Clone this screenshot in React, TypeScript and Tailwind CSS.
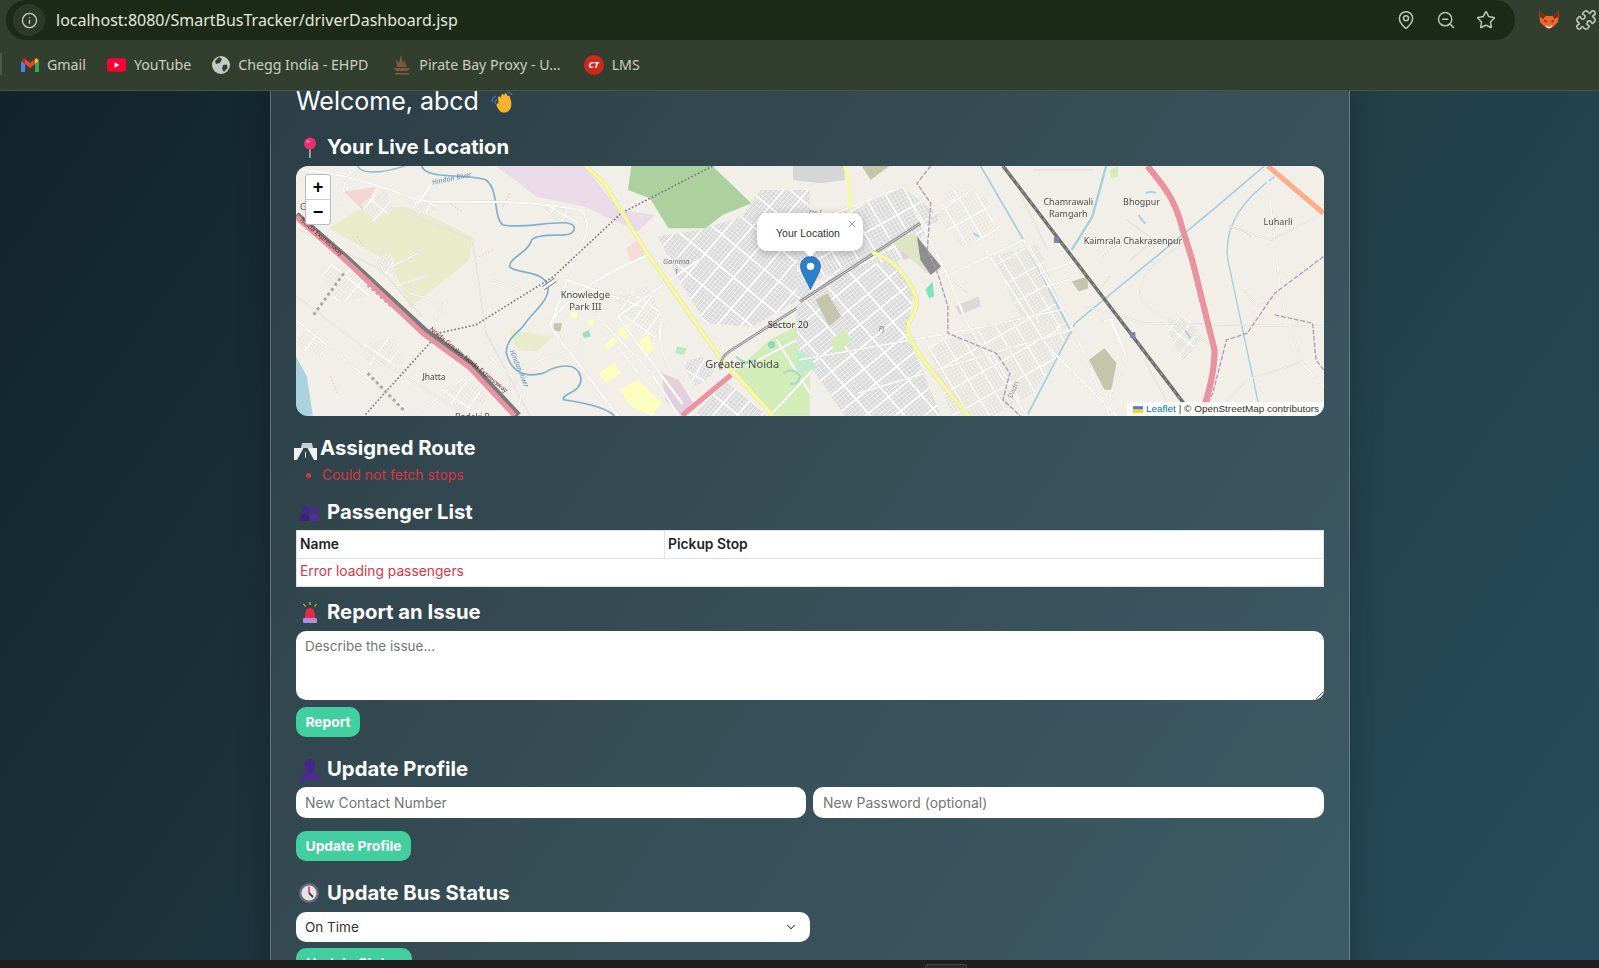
import { Info, ChevronDown, X, ZoomOut, Star, MapPin, Puzzle } from "lucide-react";
import type { ReactNode } from "react";

const L = "#ffffff";

function Urban({ id, points, angle, step = 11, fill = "#dadada", line = 4 }: { id: string; points: string; angle: number; step?: number; fill?: string; line?: number }) {
  const lines = [];
  for (let i = -180; i < 180; i++) lines.push(i);
  return (
    <g>
      <clipPath id={id}>
        <polygon points={points} />
      </clipPath>
      <polygon points={points} fill={fill} />
      <g clipPath={`url(#${id})`}>
        <g transform={`rotate(${angle} 800 400)`}>
          {lines.map((i) => (
            <path key={`a${i}`} d={`M${800 + i * step} -1200V2000`} stroke={L} strokeWidth={i % 5 === 0 ? line * 1.4 : line * 0.4} />
          ))}
          {lines.map((i) => (
            <path key={`b${i}`} d={`M-1200 ${400 + i * step}H2800`} stroke={L} strokeWidth={i % 7 === 0 ? line * 1.4 : line * 0.3} />
          ))}
        </g>
      </g>
    </g>
  );
}

function Road({ d, w = 6, c = L, edge = "#d9d5cc" }: { d: string; w?: number; c?: string; edge?: string }) {
  return (
    <>
      <path d={d} fill="none" stroke={edge} strokeWidth={w + 2} strokeLinecap="round" strokeLinejoin="round" />
      <path d={d} fill="none" stroke={c} strokeWidth={w} strokeLinecap="round" strokeLinejoin="round" />
    </>
  );
}

function MapTiles() {
  const label = { fontFamily: '"Noto Sans", sans-serif', fill: "#4d4d4d" };
  return (
    <svg viewBox="0 0 1028 250" className="block w-[1028px] h-[250px] blur-[0.25px]">
      <rect width="1028" height="250" fill="#f2efe9" />
      {/* left half of the tiles */}
      <g transform="translate(-16.2,-6) scale(0.338,0.333)">
        <polygon points="640,18 900,18 1005,150 1110,165 1060,215 900,140 760,110" fill="#ebdbe8" />
        <polygon points="1040,18 1280,18 1395,130 1310,165 1260,205 1150,205 1095,115 1030,90" fill="#add19e" />
        <polygon points="145,205 230,150 370,140 450,170 570,230 560,300 385,445 330,310" fill="#e9eccb" />
        <polygon points="190,95 285,80 245,150" fill="#f3d6d3" />
        <polygon points="1025,265 1060,240 1080,285 1040,310" fill="#f6dbd6" />
        <polygon points="680,510 810,530 760,575 700,570" fill="#e9eccb" />
        <polygon points="48,590 80,650 98,768 48,768" fill="#aad3df" />
        <Urban id="u1" points="1120,230 1240,210 1370,170 1420,90 1568,90 1568,400 1400,500 1260,490 1170,340" angle={40} />
        <polygon points="1340,640 1450,540 1568,480 1568,768 1470,768" fill="#d3edb8" />
        <polygon points="1130,640 1180,660 1232,745 1190,768 1140,720" fill="#e3cfe0" />
        <Urban id="u2" points="1225,768 1320,665 1440,768" angle={40} />
        <Urban id="u3" points="1190,610 1250,590 1290,640 1230,680" angle={30} step={9} />
        <Urban id="u9" points="240,130 310,90 340,150 275,185" angle={40} step={9} fill="#e8e5dd" line={3} />
        <Urban id="u10" points="370,120 430,100 470,150 410,160" angle={30} step={8} fill="#e8e5dd" line={3} />
        <Urban id="u11" points="285,290 335,280 340,350 295,345" angle={30} step={9} fill="#e8e5dd" line={3} />
        <Urban id="u12" points="120,320 240,300 290,400 170,430" angle={40} step={10} fill="#ebe8e0" line={3} />
        <Urban id="u13" points="235,560 330,530 370,610 270,630" angle={35} step={9} fill="#ebe8e0" line={3} />
        <Urban id="u14" points="48,500 110,520 130,590 60,570" angle={35} step={9} fill="#ebe8e0" line={3} />
        <Urban id="u15" points="990,410 1090,380 1140,500 1100,540 1020,470" angle={35} step={10} fill="#ebe8e0" line={3} />
        <Urban id="u16" points="780,140 860,140 880,190 810,180" angle={30} step={8} fill="#e8e5dd" line={3} />
        <Urban id="u17" points="480,690 560,660 620,720 530,768" angle={35} step={10} fill="#ebe8e0" line={3} />
        <polygon points="1000,510 1040,490 1030,535 1005,530" fill="#fdfdc0" />
        <polygon points="1055,555 1090,520 1105,570 1080,590" fill="#fdfdc0" />
        <polygon points="945,640 990,610 1010,640 965,670" fill="#fdfdc0" />
        <polygon points="1005,690 1060,660 1130,730 1100,768 1040,740" fill="#fdfdc0" />
        <polygon points="960,555 990,530 1000,545 970,570" fill="#fdfdc0" />
        <polygon points="1175,560 1205,565 1195,585 1170,580" fill="#bde8c0" />
        <polygon points="895,520 915,510 920,530 900,535" fill="#9fe0c4" />
        <circle cx="870" cy="465" r="10" fill="#fdfdc0" />
        <circle cx="922" cy="488" r="9" fill="#fdfdc0" />
        <polygon points="810,490 835,490 830,515 812,512" fill="#c5c5ab" />
        <path d="M230,18C240,42 300,42 370,18" fill="none" stroke="#8ab6d0" strokeWidth="4" />
        <path d="M420,18C430,60 560,40 610,60C650,90 630,170 660,195C720,210 860,170 870,200C880,245 780,210 745,240C735,280 680,290 680,320C690,340 770,330 790,370C810,420 740,460 720,500C700,520 670,540 670,580C680,620 710,660 780,640C830,610 880,610 890,650C900,700 830,700 840,720C900,730 960,740 990,768" fill="none" stroke="#7fb0d0" strokeWidth="5" />
        <path d="M230,230l15,30M500,130l40,25M680,100l-20,40M590,290l40,-20M150,650l20,50" fill="none" stroke="#dbb98a" strokeWidth="2" strokeDasharray="5 5" />
        <Road d="M48,30C110,30 230,50 380,110C470,150 620,100 890,150C930,190 900,250 850,340" w={6} />
        <Road d="M170,130C210,50 180,60 220,30" w={5} />
        <Road d="M410,130L450,70" w={8} />
        <Road d="M48,410C220,540 350,650 560,768" w={3} c="#f7f5f1" />
        <Road d="M48,480L240,640L400,768" w={4} />
        <Road d="M330,320L410,280M300,320L330,385L440,345M380,400L490,430L440,515" w={4} />
        <Road d="M60,210L300,330L420,470M350,150L570,240L610,520L740,768" w={2} c="#f7f5f1" />
        <Road d="M800,490C860,400 960,340 1090,285M1070,440L850,360L800,500L1000,768M1240,300L1000,470L1190,730" w={7} />
        <Road d="M940,470L1100,640L1180,768M1130,480C1110,560 1150,620 1160,630M1000,560L1060,640" w={6} />
        <Road d="M560,640L460,720L400,768M620,590L720,680L700,768" w={4} />
        <Road d="M1000,420L1120,385M720,620L880,560M630,360L710,390" w={3} />
        <Road d="M1380,620L1568,520M1450,768L1568,640M1470,540L1568,700" w={6} />
        <path d="M1490,640q30,-20 50,10q-10,30 -30,20M1350,590q30,30 60,10" fill="none" stroke="#a6dcc0" strokeWidth="7" />
        <circle cx="1455" cy="555" r="11" fill="#8fd8b4" />
        <path d="M1280,18L1010,160L810,350L580,495L470,520L250,768" fill="none" stroke="#7d7d7d" strokeWidth="5" strokeDasharray="5 6" />
        <path d="M100,465L190,340" fill="none" stroke="#aaa" strokeWidth="9" strokeDasharray="9 9" />
        <path d="M260,640L370,755" fill="none" stroke="#aaa" strokeWidth="9" strokeDasharray="9 9" />
        <path d="M260,375L330,440" fill="none" stroke="#aaa" strokeWidth="8" strokeDasharray="8 9" />
        <path d="M780,385L815,360" stroke="#7d7d7d" strokeWidth="14" />
        <path d="M780,385L815,360" stroke="#fff" strokeWidth="8" />
        <path d="M48,165L190,290L430,515L565,615L705,768" fill="none" stroke="#7a7a7a" strokeWidth="22" />
        <path d="M48,170L190,297L425,522L560,622L695,768" fill="none" stroke="#e892a2" strokeWidth="15" />
        <Road d="M905,18L960,70L1080,270L1300,590L1460,768" w={11} c="#f7f7a8" edge="#dcdc90" />
        <path d="M1568,420L1330,575Q1300,595 1305,630" fill="none" stroke="#8c8c8c" strokeWidth="8" />
        <path d="M1568,420L1330,575Q1300,595 1305,630" fill="none" stroke="#fff" strokeWidth="2" />
        <path d="M1335,645L1190,768" fill="none" stroke="#e892a2" strokeWidth="15" />
        <text x="60" y="150" fontSize="26" {...label}>Ga</text>
        <text x="510" y="62" fontSize="21" transform="rotate(-12 510 62)" {...label} fill="#5d8fc0" fontStyle="italic" textAnchor="middle">Hindon River</text>
        <text x="718" y="615" fontSize="21" transform="rotate(68 700 610)" {...label} fill="#5d8fc0" fontStyle="italic" textAnchor="middle">Hindon River</text>
        <text x="120" y="235" fontSize="19" transform="rotate(41 120 235)" {...label} fill="#5a2030" textAnchor="middle">Noida Expressway</text>
        <text x="555" y="605" fontSize="19" transform="rotate(40 555 605)" {...label} fill="#5a2030" textAnchor="middle">Noida-Greater Noida Expressway</text>
        <text x="904" y="413" fontSize="28" textAnchor="middle" {...label}>Knowledge</text>
        <text x="904" y="451" fontSize="28" textAnchor="middle" {...label}>Park III</text>
        <text x="1173" y="312" fontSize="22" textAnchor="middle" fontStyle="italic" {...label} fill="#777">Gamma</text>
        <text x="1173" y="342" fontSize="22" textAnchor="middle" fontStyle="italic" {...label} fill="#777">1</text>
        <text x="456" y="662" fontSize="25" textAnchor="middle" {...label}>Jhatta</text>
        <text x="570" y="782" fontSize="25" textAnchor="middle" {...label}>Bodaki B</text>
        <text x="1368" y="624" fontSize="33" textAnchor="middle" {...label}>Greater Noida</text>
      </g>
      {/* right half of the tiles */}
      <g transform="translate(504,-6) scale(0.344,0.333)">
        <polygon points="-20,18 130,18 130,60 60,70 -20,60" fill="#d6d6d6" />
        <polygon points="180,18 260,18 205,60" fill="#c5c5ab" />
        <Urban id="u4" points="-10,205 100,170 300,85 410,170 290,300 100,330 -10,400" angle={-30} />
        <Urban id="u5" points="100,330 280,300 330,400 310,520 410,768 130,768 -10,560 -10,440" angle={50} />
        <polygon points="45,420 80,400 120,470 85,500" fill="#c5c5ab" />
        <polygon points="90,540 130,510 150,540 100,590" fill="#d3edb8" />
        <polygon points="-10,570 30,590 50,625 10,640 -10,635" fill="#bfeccf" />
        <polygon points="290,260 335,250 340,290 300,300" fill="#e3cfe0" />
        <polygon points="260,240 335,220 410,330 370,340" fill="#dde5c5" />
        <polygon points="340,230 410,320 380,345 350,300" fill="#8e8e8e" />
        <polygon points="365,390 385,365 390,410 375,415" fill="#7fe3bd" />
        <Urban id="u6" points="560,290 690,250 780,500 680,560" angle={-30} step={9} fill="#e4e1da" line={3} />
        <Urban id="u7" points="370,560 640,470 790,520 680,700 560,768 440,768" angle={-30} step={10} fill="#e7e4dc" line={3} />
        <Urban id="u8" points="1060,490 1120,470 1170,530 1110,600" angle={40} step={7} fill="#e4e1da" line={3} />
        <Urban id="u18" points="430,90 540,100 570,220 470,260 400,170" angle={-30} step={10} fill="#ebe8e0" line={3} />
        <polygon points="450,440 520,410 525,440 465,465" fill="#d9d9d9" />
        <polygon points="790,365 835,350 838,385 810,395" fill="#c5c5ab" />
        <polygon points="840,600 885,565 920,610 905,690 885,690" fill="#c5c5ab" />
        <polygon points="900,30 925,18 925,50 905,55" fill="#d3edb8" />
        <path d="M1005,100q20,-8 30,0M985,165q10,20 20,25M1120,510l15,25M505,220l15,10" fill="none" stroke="#aad3df" strokeWidth="6" />
        <path d="M880,290l30,-30M900,350l-30,40M1260,190l50,40M1110,600l30,-30M450,370l40,30" fill="none" stroke="#dbb98a" strokeWidth="2" strokeDasharray="5 5" />
        <path d="M890,18L850,170L790,270" fill="none" stroke="#a6cfdf" strokeWidth="7" />
        <path d="M1350,18L1200,150L800,490L660,768" fill="none" stroke="#a6cfdf" strokeWidth="5" />
        <path d="M525,18L650,240L790,520" fill="none" stroke="#a6cfdf" strokeWidth="5" />
        <path d="M1380,50C1270,130 1220,220 1250,330L1340,768" fill="none" stroke="#a6cfdf" strokeWidth="4" />
        <Road d="M0,200L300,80M350,190L500,90M420,350L650,240" w={6} />
        <Road d="M300,80L430,350L490,500L660,768" w={6} />
        <Road d="M540,270L720,560L920,768M700,340L810,300M720,380L780,360" w={6} />
        <Road d="M0,600L490,510L760,450M170,700L790,510" w={5} />
        <Road d="M650,240L800,520L900,768M900,480L950,590L900,710M870,490L905,475L950,590" w={5} />
        <Road d="M830,440L1000,490L1520,500" w={3} c="#f7f5f1" />
        <Road d="M1360,60L1400,420L1460,610L1522,680" w={4} />
        <Road d="M1250,200L1370,240L1522,160M1030,310L1130,240M1290,390L1330,440L1400,400" w={3} c="#f7f5f1" />
        <Road d="M1030,310C960,400 980,440 1080,480L1200,560M1200,768L1300,660L1450,610" w={3} c="#f7f5f1" />
        <Road d="M950,180L1030,240L960,300M680,30L850,30M640,100L720,270M1000,600L1090,768" w={2} c="#f7f5f1" />
        <path d="M380,18L340,70L380,130L370,270L400,340L430,440L430,520L570,580L610,640L590,720L640,768" fill="none" stroke="#b79ab5" strokeWidth="4" strokeDasharray="14 5" />
        <path d="M1522,290L1380,400L1300,520L1240,540L1200,700L1170,768" fill="none" stroke="#b79ab5" strokeWidth="4" strokeDasharray="14 5" />
        <path d="M1380,465L1490,490L1500,600L1522,630" fill="none" stroke="#b79ab5" strokeWidth="4" strokeDasharray="14 5" />
        <path d="M590,18L1115,730" fill="none" stroke="#6d6d6d" strokeWidth="10" />
        <path d="M590,18L1115,730" fill="none" stroke="#c9c9c9" strokeWidth="2" strokeDasharray="10 12" />
        <rect x="738" y="232" width="15" height="17" fill="#7981b3" />
        <rect x="960" y="517" width="15" height="17" fill="#7981b3" />
        <path d="M1360,18L1522,160" fill="none" stroke="#fcad8a" strokeWidth="15" />
        <path d="M1010,18C1060,80 1090,120 1110,200L1140,300L1205,570C1205,640 1190,700 1165,768" fill="none" stroke="#e892a2" strokeWidth="18" />
        <path d="M130,18C145,60 150,100 145,150" fill="none" stroke="#f7f7a8" strokeWidth="11" />
        <path d="M350,190L0,425" fill="none" stroke="#8c8c8c" strokeWidth="9" />
        <path d="M350,190L0,425" fill="none" stroke="#fff" strokeWidth="2" />
        <Road d="M215,280C290,300 340,400 340,430C335,470 305,490 315,520C340,590 420,680 490,768" w={11} c="#f7f7a8" edge="#dcdc90" />
        <text x="780" y="135" fontSize="26" textAnchor="middle" {...label}>Chamrawali</text>
        <text x="780" y="170" fontSize="26" textAnchor="middle" {...label}>Ramgarh</text>
        <text x="993" y="135" fontSize="26" textAnchor="middle" {...label}>Bhogpur</text>
        <text x="1390" y="195" fontSize="26" textAnchor="middle" {...label}>Luharli</text>
        <text x="968" y="253" fontSize="26" textAnchor="middle" {...label}>Kaimrala Chakrasenpur</text>
        <text x="-35" y="505" fontSize="27" textAnchor="middle" {...label} fill="#333">Sector 20</text>
        <text x="237" y="513" fontSize="20" textAnchor="middle" fontStyle="italic" {...label} fill="#777">PJ</text>
        <text x="45" y="163" fontSize="18" textAnchor="middle" fontStyle="italic" {...label} fill="#888">Ete 1</text>
        <text x="622" y="695" fontSize="20" textAnchor="middle" transform="rotate(-68 622 690)" {...label} fill="#a583a3">Dadri</text>
      </g>
    </svg>
  );
}

function LiveMap() {
  return (
    <div className="relative mt-[5px] h-[250px] w-[1028px] overflow-hidden rounded-[12px]">
      <MapTiles />
      <div className="absolute left-[9px] top-[8px] flex w-[26px] flex-col overflow-hidden rounded-[3px] border border-[#bbb] bg-white font-['Liberation_Sans',sans-serif] text-[18px] font-bold leading-none text-black">
        <div className="flex h-[25px] items-center justify-center border-b border-[#ccc]">+</div>
        <div className="flex h-[24px] items-center justify-center">−</div>
      </div>
      <svg viewBox="0 0 25 41" className="absolute left-[504px] top-[90px] h-[34px] w-[21px]">
        <path d="M12.5 0.5C5.5 0.5 0.5 6 0.5 12.5C0.5 20 9 32 12.5 40.5C16 32 24.5 20 24.5 12.5C24.5 6 19.5 0.5 12.5 0.5Z" fill="#2a81cb" stroke="#2568a5" />
        <circle cx="12.5" cy="12.5" r="4.5" fill="#fff" />
      </svg>
      <div className="absolute left-[461px] top-[47px] flex h-[38px] w-[106px] items-center justify-center rounded-[10px] bg-white pr-[4px] pt-[4px] font-['Liberation_Sans',sans-serif] text-[10.5px] text-[#333] shadow-[0_2px_8px_rgba(0,0,0,0.25)]">
        Your Location
        <X className="absolute right-[5px] top-[5px] h-[12px] w-[12px] text-[#757575]" strokeWidth={1.5} />
        <span className="absolute left-[46px] top-[37px] h-0 w-0 border-x-[7px] border-t-[7px] border-x-transparent border-t-white" />
      </div>
      <div className="absolute bottom-0 right-0 flex h-[14px] items-center gap-[3px] bg-white/85 pl-[6px] pr-[5px] font-['Liberation_Sans',sans-serif] text-[9.95px] text-[#333]">
        <svg viewBox="0 0 12 8" className="h-[7px] w-[10px]">
          <rect width="12" height="4" fill="#4c7be1" />
          <rect y="4" width="12" height="4" fill="#ffd500" />
        </svg>
        <span className="text-[#0078a8]">Leaflet</span>
        <span>| © OpenStreetMap contributors</span>
      </div>
    </div>
  );
}

function Heading({ icon, w = 31, className = "", children }: { icon: ReactNode; w?: number; className?: string; children: ReactNode }) {
  return (
    <h3 className={`flex h-[28px] items-center text-[20.3px] font-bold leading-[26px] text-white ${className}`}>
      <span className="flex shrink-0 items-center" style={{ width: w }}>
        {icon}
      </span>
      {children}
    </h3>
  );
}

const PinIcon = (
  <svg viewBox="0 0 14 21" className="ml-[7px] h-[21px] w-[14px]">
    <rect x="6" y="9" width="1.8" height="12" fill="#a9a9b2" />
    <circle cx="7" cy="6.5" r="6" fill="#e8306f" />
    <circle cx="5" cy="4.5" r="1.6" fill="#f986ab" />
  </svg>
);
const RoadIcon = (
  <svg viewBox="0 0 23 18" className="-ml-[2px] mt-[6px] h-[18px] w-[23px]">
    <path d="M7 6L8 1H18L19 6Z" fill="#c9ced2" />
    <path d="M0 18V6H23V18Z" fill="#eef1f3" />
    <path d="M3 18L9.5 6H13.5L20 18Z" fill="#2e4350" />
    <rect x="11" y="10" width="1" height="6" fill="#eef1f3" />
  </svg>
);
const BustsIcon = (
  <svg viewBox="0 0 22 16" className="ml-[3px] mt-[2px] h-[16px] w-[21px]">
    <circle cx="6.5" cy="5" r="4" fill="#46268a" />
    <circle cx="15.5" cy="5" r="4" fill="#4c2a92" />
    <path d="M0 16C0 11 3 9 6.5 9C10 9 11 12 11 16Z" fill="#3f2280" />
    <path d="M11 16C11 11 12 9 15.5 9C19 9 22 11 22 16Z" fill="#512f9c" />
  </svg>
);
const SirenIcon = (
  <svg viewBox="0 0 18 21" className="ml-[5px] h-[21px] w-[18px]">
    <path d="M9 0V3M2.5 2L4.5 4.5M15.5 2L13.5 4.5" stroke="#f4b740" strokeWidth="1.2" />
    <path d="M4 16C4 9 5.5 6 9 6C12.5 6 14 9 14 16Z" fill="#ea2a45" />
    <rect x="2" y="16" width="14" height="5" rx="1" fill="#b88ade" />
  </svg>
);
const BustIcon = (
  <svg viewBox="0 0 20 21" className="ml-[4px] h-[21px] w-[20px]">
    <ellipse cx="10" cy="7" rx="5" ry="7" fill="#46268a" />
    <path d="M0 21C0 16 4 14 7 13H13C16 14 20 16 20 21Z" fill="#4b2a93" />
  </svg>
);
const ClockIcon = (
  <svg viewBox="0 0 20 20" className="ml-[3px] h-[20px] w-[20px]">
    <circle cx="10" cy="10" r="10" fill="#6b6b78" />
    <circle cx="10" cy="10" r="7.6" fill="#e6e2ea" />
    <path d="M10 3.5V10" stroke="#e8306f" strokeWidth="1.6" />
    <path d="M10 10L14 14" stroke="#3f3f4a" strokeWidth="1.8" />
  </svg>
);

function GreenButton({ w, children }: { w: number; children: ReactNode }) {
  return (
    <button className="flex h-[30px] shrink-0 items-center justify-center rounded-[10px] bg-[#41cfa0] text-[13.8px] font-bold text-white" style={{ width: w }}>
      {children}
    </button>
  );
}

function Bookmark({ icon, children, className = "" }: { icon: ReactNode; children: ReactNode; className?: string }) {
  return (
    <div className={`flex items-center gap-[8px] text-[14.2px] text-[#c9d0c2] ${className}`}>
      {icon}
      <span>{children}</span>
    </div>
  );
}

function BrowserChrome() {
  return (
    <div className="shrink-0 border-b border-[#4a5540] bg-[#333f2e] font-['Noto_Sans',sans-serif]">
      <div className="flex h-[40px] items-center">
        <div className="ml-[6px] flex h-[40px] w-[1509px] items-center rounded-full bg-[#1d2a18]">
          <span className="ml-[7px] flex h-[32px] w-[32px] items-center justify-center rounded-full bg-[#2e3a29]">
            <Info className="h-[17px] w-[17px] text-[#cfd6c8]" strokeWidth={1.8} />
          </span>
          <span className="ml-[11px] text-[16px] text-[#e3e8dd]">localhost:8080/SmartBusTracker/driverDashboard.jsp</span>
          <div className="ml-auto mr-[19px] flex items-center gap-[20px] text-[#bcc5b4]">
            <MapPin className="h-[20px] w-[20px]" strokeWidth={1.8} />
            <ZoomOut className="h-[20px] w-[20px]" strokeWidth={1.8} />
            <Star className="h-[20px] w-[20px]" strokeWidth={1.8} />
          </div>
        </div>
        <svg viewBox="0 0 20 18" className="ml-[24px] h-[18px] w-[20px] shrink-0">
          <path d="M0 0L6.5 5H13.5L20 0L19 11L14 16L10 18L6 16L1 11Z" fill="#f0652a" />
          <path d="M0 0L6.5 5L4.5 8L1 6ZM20 0L13.5 5L15.5 8L19 6Z" fill="#7c2a0c" />
          <path d="M7 14L10 16L13 14L12 17H8Z" fill="#f4f1ec" />
          <path d="M5 9L8 10L6.5 11.5ZM15 9L12 10L13.5 11.5Z" fill="#3a1c0c" />
        </svg>
        <Puzzle className="ml-[16px] h-[22px] w-[22px] shrink-0 text-[#bcc5b4]" strokeWidth={1.8} />
      </div>
      <div className="relative flex h-[50px] items-center pl-[21px]">
        <span className="absolute left-0 top-[13px] h-[22px] w-[2px] bg-[#4f5a4a]" />
        <Bookmark icon={<svg viewBox="0 0 18 14" className="h-[14px] w-[18px]">
          <path d="M0 14V3L4 6V14Z" fill="#4285f4" />
          <path d="M14 14V6L18 3V14Z" fill="#34a853" />
          <path d="M4 6L9 10L14 6V1L9 5L4 1Z" fill="#ea4335" />
          <path d="M0 3L4 6V1L2.5 0Z" fill="#c5221f" />
          <path d="M18 3L14 6V1L15.5 0Z" fill="#fbbc04" />
        </svg>}>Gmail</Bookmark>
        <Bookmark className="ml-[21px]" icon={<svg viewBox="0 0 20 14" className="h-[14px] w-[19px]">
          <rect width="20" height="14" rx="3.5" fill="#ff0033" />
          <path d="M8 4L13 7L8 10Z" fill="#fff" />
        </svg>}>YouTube</Bookmark>
        <Bookmark className="ml-[21px]" icon={<svg viewBox="0 0 18 18" className="h-[18px] w-[18px]">
          <circle cx="9" cy="9" r="9" fill="#c4c9c3" />
          <path d="M7 1L10 3L8 7L4 8L3 5ZM11 9L15 8.5L15.5 12L12 16L10 13Z" fill="#333f2e" />
        </svg>}>Chegg India - EHPD</Bookmark>
        <Bookmark className="ml-[25px]" icon={<svg viewBox="0 0 18 20" className="h-[20px] w-[18px]">
          <path d="M8 0L6 8L3 4L4 12H14L11 5L10 9ZM1 13H17L15 16H3ZM2 18H16V19.5H2Z" fill="#84573a" />
        </svg>}>Pirate Bay Proxy - U...</Bookmark>
        <Bookmark className="ml-[23px]" icon={<span className="flex h-[20px] w-[20px] items-center justify-center rounded-full bg-[#d0271d] text-[9px] font-bold italic text-white">CT</span>}>LMS</Bookmark>
      </div>
    </div>
  );
}

export default function App() {
  return (
    <div className="flex h-[968px] w-[1599px] flex-col overflow-hidden font-['Inter',sans-serif]">
      <BrowserChrome />
      <div className="min-h-0 flex-1 overflow-hidden bg-[linear-gradient(125deg,#11232b_0%,#203a43_50%,#284c5c_100%)]">
        <div className="ml-[270px] h-[900px] w-[1080px] border-x border-white/25 bg-white/10 px-[25px] shadow-[0_0_30px_rgba(0,0,0,0.25)]">
          <h2 className="flex h-[21px] items-center text-[25px] leading-[21px] text-white">
            Welcome, abcd
            <svg viewBox="0 0 24 22" className="ml-[12px] h-[22px] w-[24px]">
              <path d="M1 11C1 8 2.5 6 5 5M4 13C4 11 5 9 6 8.5M16 1C18 1 20 2 21 4" fill="none" stroke="#3b7cc4" strokeWidth="1.2" />
              <path d="M8 19C5 15 5 13 6.5 12L7.5 13L7 6.5C7.5 5 9 5.5 9.5 7L10.5 4C11 2.5 12.5 3 13 4.5L13.5 3C14.5 1.5 16 2.5 16 4L17 5C18 4.5 19.5 5.5 19 7L20 10C21.5 15 19 21 14 21.5C11.5 21.8 9.5 21 8 19Z" fill="#f7b32b" />
            </svg>
          </h2>
          <Heading icon={PinIcon} className="mt-[21px]">Your Live Location</Heading>
          <LiveMap />

          <Heading icon={RoadIcon} w={24} className="mt-[18px]">Assigned Route</Heading>
          <ul className="mt-[3px] list-disc pl-[26px] text-[14px] leading-[20px] text-[#dc3545] marker:text-[#dc3545]">
            <li>Could not fetch stops</li>
          </ul>

          <Heading icon={BustsIcon} className="mt-[13px]">Passenger List</Heading>
          <table className="mt-[4px] w-[1028px] table-fixed border-collapse bg-white text-[13.8px] text-[#212529]">
            <thead>
              <tr className="h-[28px]">
                <th className="w-[368px] border border-[#dee2e6] px-[3px] text-left font-semibold">Name</th>
                <th className="border border-[#dee2e6] px-[3px] text-left font-semibold">Pickup Stop</th>
              </tr>
            </thead>
            <tbody>
              <tr className="h-[28px]">
                <td colSpan={2} className="border border-[#dee2e6] px-[3px] pb-[2px] text-[#dc3545]">Error loading passengers</td>
              </tr>
            </tbody>
          </table>

          <Heading icon={SirenIcon} className="mt-[11px]">Report an Issue</Heading>
          <textarea
            placeholder="Describe the issue..."
            className="mt-[5px] block h-[69px] w-[1028px] rounded-[10px] bg-white px-[9px] py-[5px] text-[13.5px] text-[#212529] outline-none placeholder:text-[#757575]"
          />
          <div className="mt-[7px] flex">
            <GreenButton w={64}>Report</GreenButton>
          </div>

          <Heading icon={BustIcon} className="mt-[18px]">Update Profile</Heading>
          <div className="mt-[4px] flex gap-[7px]">
            <input placeholder="New Contact Number" className="h-[31px] w-[510px] rounded-[10px] bg-white px-[9px] text-[13.9px] outline-none placeholder:text-[#757575]" />
            <input placeholder="New Password (optional)" className="h-[31px] w-[511px] rounded-[10px] bg-white px-[10px] text-[13.9px] outline-none placeholder:text-[#757575]" />
          </div>
          <div className="mt-[13px] flex">
            <GreenButton w={115}>Update Profile</GreenButton>
          </div>

          <Heading icon={ClockIcon} className="mt-[18px]">Update Bus Status</Heading>
          <div className="relative mt-[5px] w-[514px]">
            <select className="h-[30px] w-full appearance-none rounded-[10px] bg-white px-[9px] text-[13.5px] text-[#333] outline-none">
              <option>On Time</option>
            </select>
            <ChevronDown className="absolute right-[12px] top-[8px] h-[14px] w-[14px] text-[#333]" strokeWidth={1.8} />
          </div>
          <div className="mt-[6px] flex">
            <GreenButton w={116}>Update Status</GreenButton>
          </div>
        </div>
      </div>
      <div className="flex h-[8px] shrink-0 items-end bg-[#1f1f1f]">
        <span className="ml-[925px] h-[4px] w-[42px] rounded-t-[3px] border-x border-t border-[#444] bg-[#2b2b2b]" />
      </div>
    </div>
  );
}
